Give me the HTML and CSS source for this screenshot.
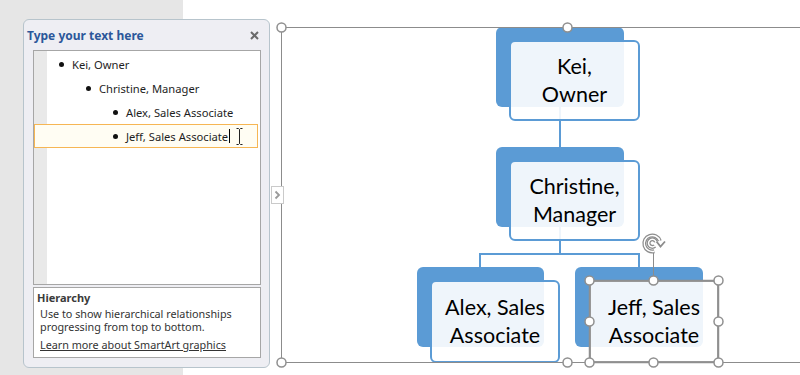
FILE: index.html
```html
<!DOCTYPE html>
<html lang="en">
<head>
    <meta charset="UTF-8">
    <title>SmartArt Text Pane</title>
    <link rel="stylesheet" href="styles.css">
</head>
<body>

    <div class="app">
        <div class="side"></div>
        <div class="stage"></div>
    </div>

    <!-- diagram canvas -->
    <div class="chart">
        <div class="back b-kei"></div>
        <div class="back b-chris"></div>
        <div class="back b-alex"></div>
        <div class="back b-jeff"></div>

        <svg class="links" width="800" height="375">
            <path d="M560 107 V147 M560 227 V254 M480 254 H639 M480 253 V267 M639 253 V267" />
        </svg>

        <div class="front f-kei">Kei,<br>Owner</div>
        <div class="front f-chris">Christine,<br>Manager</div>
        <div class="front f-alex">Alex, Sales<br>Associate</div>
        <div class="front f-jeff">Jeff, Sales<br>Associate</div>

        <svg class="select" width="800" height="375">
            <path class="frame" d="M281.5 27.5 H800 M281.5 27.5 V362.5 H800" />
            <rect class="box" x="589.5" y="280.5" width="129" height="82" />
            <path class="frame" d="M653.5 252 V280" />
            <!-- rotate handle -->
            <g class="rot">
                <path class="ring" d="M654.3 251.2 A8 8 0 1 1 659.8 240.8" />
                <path class="ring-in" d="M654.3 251.2 A8 8 0 1 1 659.8 240.8" />
                <path class="tip" d="M656.5 241.5 L660.5 246.5 L665 241.5" />
                <path class="ring" d="M654.8 246 A3.8 3.8 0 1 1 656 242" />
                <path class="ring-in" d="M654.8 246 A3.8 3.8 0 1 1 656 242" />
            </g>
            <circle cx="281.5" cy="27.5" r="4.5" />
            <circle cx="567.5" cy="27.5" r="4.5" />
            <circle cx="281.5" cy="362.5" r="4.5" />
            <circle cx="567.5" cy="362.5" r="4.5" />
            <circle cx="589.5" cy="280.5" r="4.5" />
            <circle cx="653.5" cy="280.5" r="4.5" />
            <circle cx="718.5" cy="280.5" r="4.5" />
            <circle cx="589.5" cy="321.5" r="4.5" />
            <circle cx="718.5" cy="321.5" r="4.5" />
            <circle cx="589.5" cy="362.5" r="4.5" />
            <circle cx="653.5" cy="362.5" r="4.5" />
            <circle cx="718.5" cy="362.5" r="4.5" />
        </svg>
    </div>

    <!-- text pane -->
    <div class="pane">
        <div class="pane-head">
            <span class="pane-title">Type your text here</span>
            <svg class="pane-close" width="9" height="9" viewBox="0 0 9 9">
                <path d="M1 1 L8 8 M8 1 L1 8" />
            </svg>
        </div>

        <ul class="outline">
            <li class="row l1"><i class="dot"></i>Kei, Owner</li>
            <li class="row l2"><i class="dot"></i>Christine, Manager</li>
            <li class="row l3"><i class="dot"></i>Alex, Sales Associate</li>
            <li class="row l3 active"><i class="dot"></i>Jeff, Sales Associate<i class="caret"></i>
                <svg class="ibeam" width="7" height="17" viewBox="0 0 7 17">
                    <path d="M0.5 0.5 H2.5 L3.5 1.5 L4.5 0.5 H6.5 M3.5 1.5 V15.5 M0.5 16.5 H2.5 L3.5 15.5 L4.5 16.5 H6.5" />
                </svg>
            </li>
        </ul>

        <div class="about">
            <h2>Hierarchy</h2>
            <p>Use to show hierarchical relationships progressing from top to bottom.</p>
            <a href="">Learn more about SmartArt graphics</a>
        </div>
    </div>

    <div class="expand">
        <svg width="7" height="10" viewBox="0 0 7 10">
            <path d="M1.5 1.5 L5 5 L1.5 8.5" />
        </svg>
    </div>

</body>
</html>
```

FILE: styles.css
```css
/*初始化*/
*{
    box-sizing: border-box;
}
body{
    margin: 0;
    font-family: "Noto Sans", "Open Sans", sans-serif;
    overflow: hidden;
}

/*1.页面背景: 左侧灰色, 右侧白色*/
.app{
    display: flex;
    height: 375px;
}
.side{
    width: 183px;
    background-color: #e6e6e6;
}
.stage{
    flex: 1;
    background-color: #fff;
}

/*2.图表画布*/
.chart{
    position: absolute;
    left: 0;
    top: 0;
    width: 800px;
    height: 375px;
}
.back{
    position: absolute;
    width: 128px;
    height: 80px;
    background-color: #5b9bd5;
    border-radius: 6px;
}
.b-kei{ left: 496px; top: 27px; }
.b-chris{ left: 496px; top: 147px; }
.b-alex{ left: 417px; top: 267px; width: 127px; }
.b-jeff{ left: 575px; top: 267px; }

.links, .select{
    position: absolute;
    left: 0;
    top: 0;
}
.links path{
    fill: none;
    stroke: #5b9bd5;
    stroke-width: 2;
}

.front{
    position: absolute;
    width: 131px;
    height: 81px;
    padding-bottom: 2px;
    border: 2px solid #5b9bd5;
    border-radius: 6px;
    background-color: rgba(255, 255, 255, 0.9);

    display: flex;
    align-items: center;
    justify-content: center;
    text-align: center;

    font-family: "Lato", "Liberation Sans", sans-serif;
    font-size: 21.5px;
    line-height: 28px;
    color: #000;
}
.f-kei{ left: 509px; top: 40px; }
.f-chris{ left: 509px; top: 160px; }
.f-alex{ left: 430px; top: 280px; width: 130px; height: 83px; }
.f-jeff{ left: 589px; top: 280px; width: 130px; height: 83px; border-color: #9a9a9a; }

/*3.选中框和控制点*/
.select .frame{
    fill: none;
    stroke: #8c8c8c;
    stroke-width: 1;
}
.select .box{
    fill: none;
    stroke: #8f8f8f;
    stroke-width: 1.5;
}
.select circle{
    fill: #fff;
    stroke: #8f8f8f;
    stroke-width: 1.5;
}
.rot path{
    fill: none;
}
.rot .ring{
    stroke: #8c8c8c;
    stroke-width: 4;
}
.rot .ring-in{
    stroke: #fff;
    stroke-width: 1.5;
}
.rot .tip{
    stroke: #8c8c8c;
    stroke-width: 1.8;
    fill: #fff;
}

/*4.文本窗格*/
.pane{
    position: absolute;
    left: 23px;
    top: 19px;
    width: 247px;
    height: 349px;
    padding: 0 8px 0 9px;
    background-color: #eeeef3;
    border: 1px solid #b7c4cc;
    border-radius: 6px;

    display: flex;
    flex-direction: column;
}
.pane-head{
    height: 30px;
    margin-left: -6px;
    padding-top: 1px;
    display: flex;
    align-items: center;
    justify-content: space-between;
}
.pane-title{
    font-size: 12px;
    font-weight: bold;
    color: #2b579a;
}
.pane-close{
    margin-right: 2px;
}
.pane-close path{
    stroke: #6a6a6a;
    stroke-width: 2;
}

.outline{
    list-style: none;
    margin: 0;
    padding: 1px 0 0;
    height: 235px;
    border: 1px solid #a6a6a6;
    background: linear-gradient(90deg, #e9e9e9 13px, #fff 13px);
}
.row{
    height: 24px;
    display: flex;
    align-items: center;
    font-size: 11.2px;
    color: #1e1e1e;
}
.l1{ padding-left: 25px; }
.l2{ padding-left: 52px; }
.l3{ padding-left: 79px; }
.dot{
    width: 5px;
    height: 5px;
    border-radius: 50%;
    background-color: #111;
    margin-right: 8px;
    flex: none;
}
.row.active{
    margin-right: 2px;
    padding-left: 78px;
    border: 1px solid #f6b654;
    background-color: #fffdf3;
}
.caret{
    width: 1px;
    height: 14px;
    margin-left: 1px;
    background-color: #000;
}
.ibeam{
    margin-left: 6px;
}
.ibeam path{
    fill: none;
    stroke: #222;
    stroke-width: 1;
}

.about{
    margin-top: 2px;
    height: 71px;
    padding: 2px 0 0 3px;
    border: 1px solid #a6a6a6;
    background-color: #fff;
    font-size: 10.8px;
    color: #333;
}
.about h2{
    margin: 0;
    font-size: 11px;
    font-weight: bold;
    color: #3b3b3b;
}
.about p{
    margin: 2px 0 0 3px;
    line-height: 13px;
}
.about a{
    display: block;
    margin: 4px 0 0 3px;
    color: #333;
}

/*5.展开按钮*/
.expand{
    position: absolute;
    left: 271px;
    top: 186px;
    width: 13px;
    height: 18px;
    border: 1px solid #cacaca;
    background-color: #fff;

    display: flex;
    align-items: center;
    justify-content: center;
}
.expand path{
    fill: none;
    stroke: #9a9a9a;
    stroke-width: 1.8;
}
```
